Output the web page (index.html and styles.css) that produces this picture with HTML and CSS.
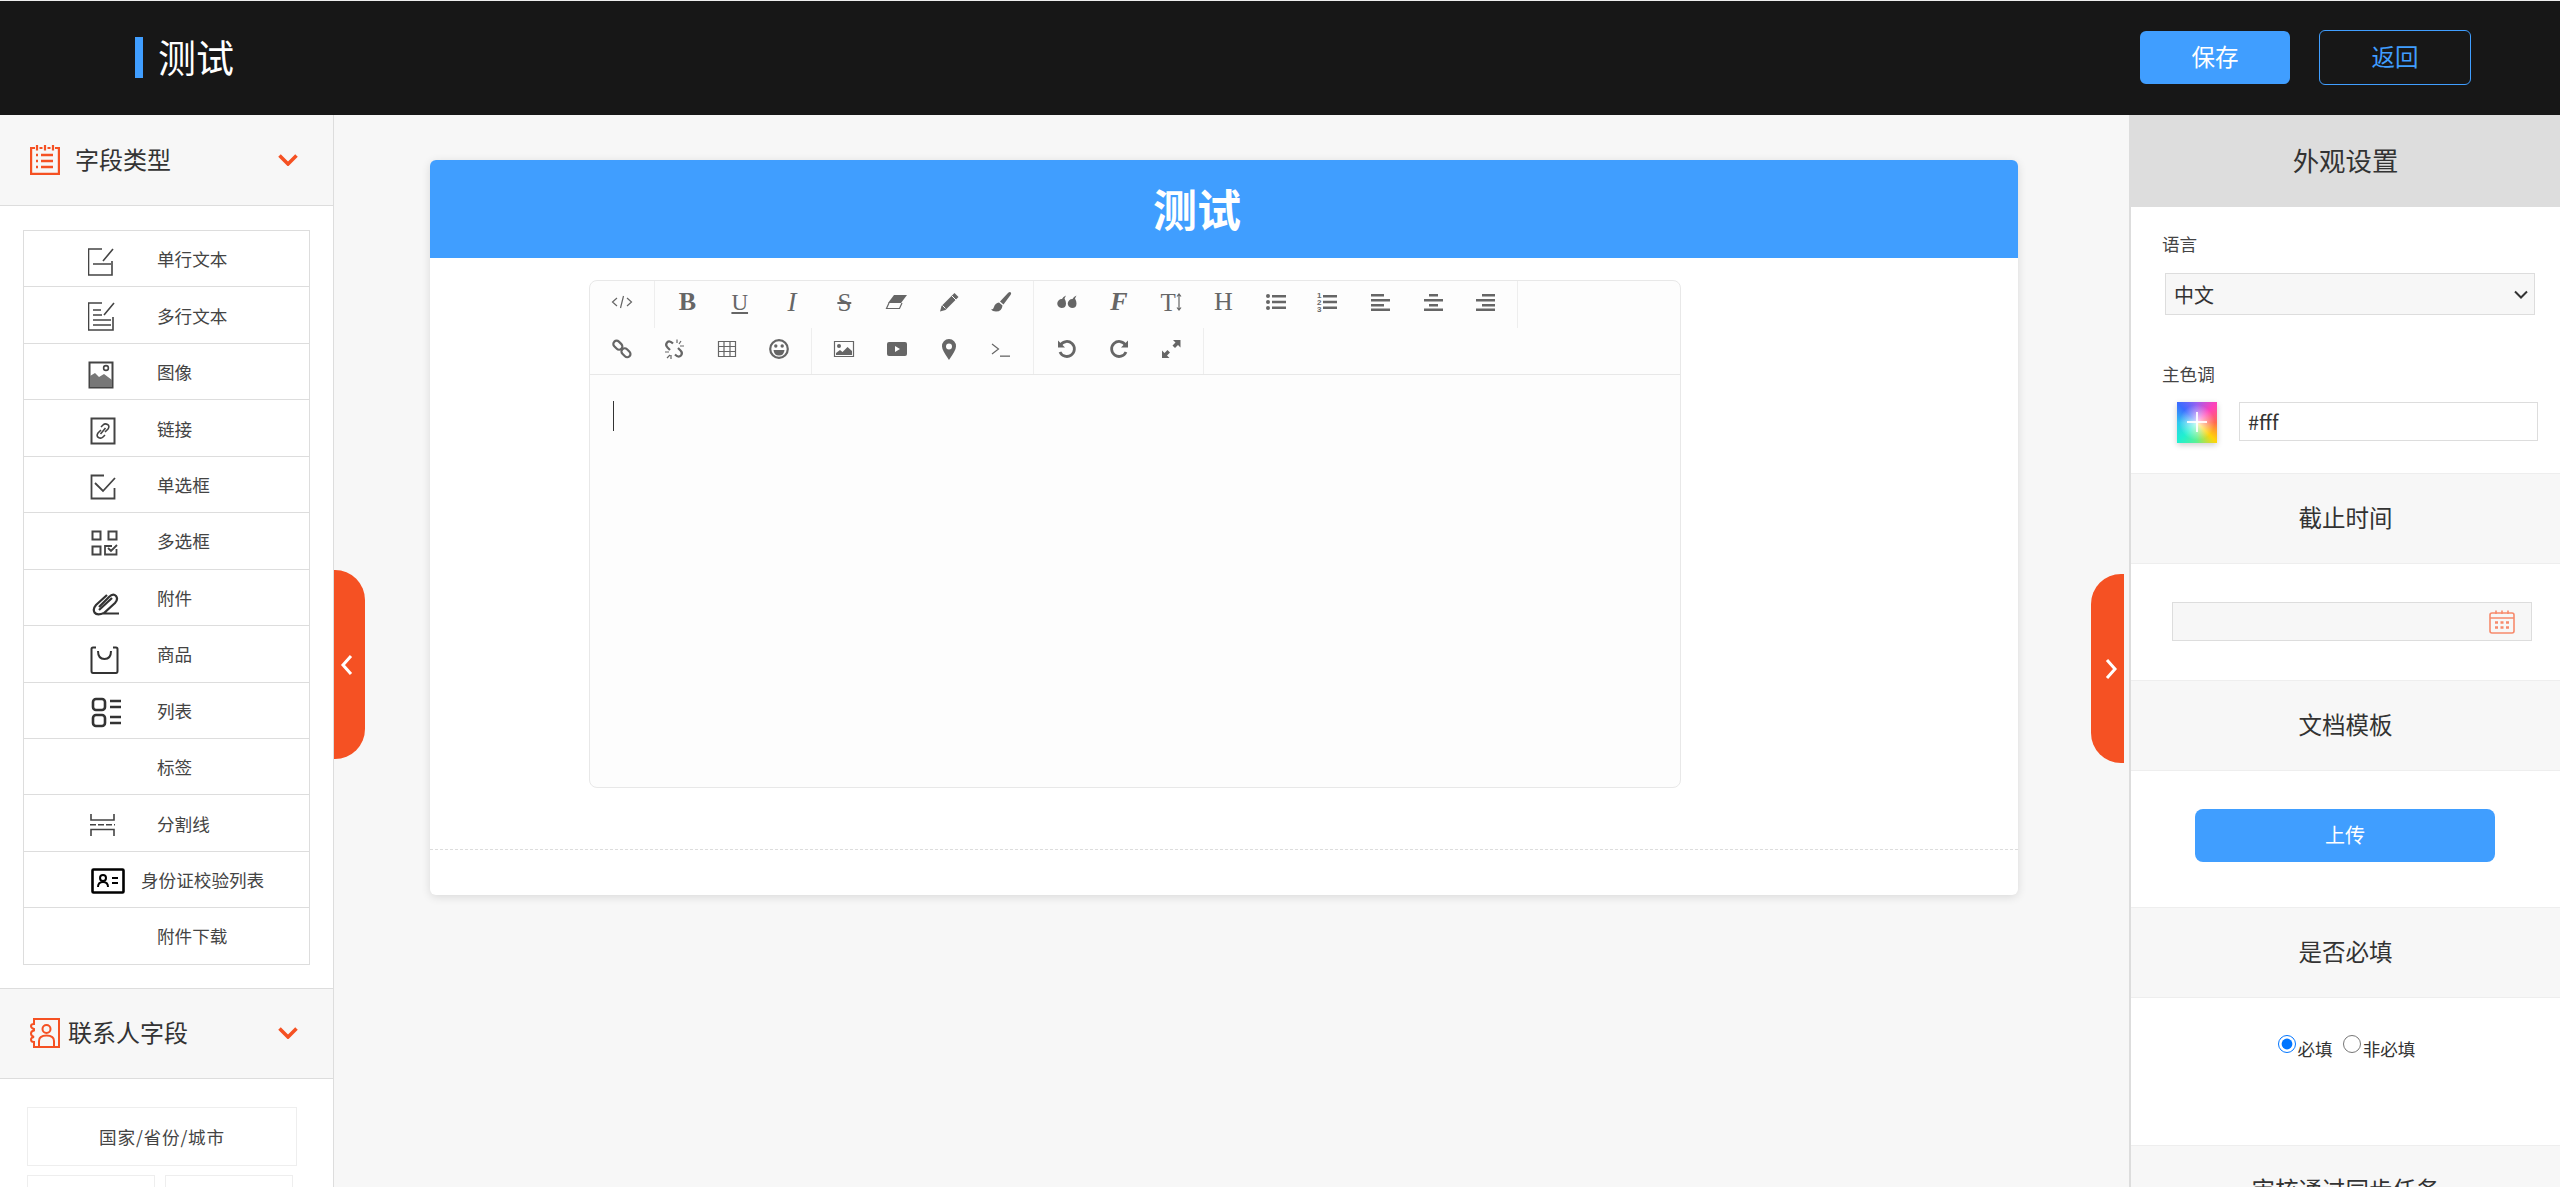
FILE: index.html
```html
<!DOCTYPE html>
<html>
<head>
  <meta charset="utf-8">
  <title>测试</title>
  <link rel="stylesheet" href="styles.css">
</head>
<body>
  <div class="topbar">
    <span class="topbar-mark"></span>
    <span class="topbar-title">测试</span>
    <button class="btn-save">保存</button>
    <button class="btn-back">返回</button>
  </div>

  <div class="workspace">
    <!-- left: field types -->
    <div class="leftbar">
      <div class="group-head">
        <svg class="group-icon" viewBox="0 0 30 30">
          <path stroke-width="2.2" d="M5 3H1.100V28.900H28.900V3H25M9.500 3H12.500M17.500 3H20.500" />
          <path stroke-width="2.2" d="M7 0V5.500M15 0V5.500M23 0V5.500" />
          <path stroke-width="2.6" d="M11 10H23M11 16H23M11 22H23" />
          <path stroke-width="2.6" d="M6 10H8M6 16H8M6 22H8" />
        </svg>
        <span class="group-name">字段类型</span>
        <svg class="group-arrow" viewBox="0 0 20 12"><path d="M1.500 1.500L10 10L18.500 1.500" /></svg>
      </div>
      <div class="field-list">
        <div class="field">
          <span class="field-icon">
            <svg viewBox="0 0 44 40"><path d="M14 10H0.500V36H24V22M25 10L15 22M5 25H23" /></svg>
          </span>单行文本
        </div>
        <div class="field">
          <span class="field-icon">
            <svg viewBox="0 0 44 40"><path d="M14 8H0.500V35H25V22M26 8L16 20M5 15H13M5 20H14M5 25H23M5 30H23" /></svg>
          </span>多行文本
        </div>
        <div class="field">
          <span class="field-icon">
            <svg viewBox="0 0 44 40">
              <rect x="1.500" y="10.500" width="23" height="25" stroke-width="2" />
              <path class="solid" d="M2 35V24L7 21L11 25L16 22L24 28V35Z" />
              <circle cx="18" cy="16" r="2.400" />
            </svg>
          </span>图像
        </div>
        <div class="field">
          <span class="field-icon">
            <svg viewBox="0 0 44 40">
              <rect x="3.500" y="10.500" width="23" height="25" stroke-width="2" />
              <path d="M13 22L10 25Q8 28 10.500 29.500Q13 31 15 29L17 27M17 24L20 21Q22 18 19.500 16.500Q17 15 15 17L13 19M12.500 26L17.500 20" />
            </svg>
          </span>链接
        </div>
        <div class="field">
          <span class="field-icon">
            <svg viewBox="0 0 44 40"><path stroke-width="1.800" d="M16 11.500H3.500V34.500H26.500V24M7 19L15 27L27 14" /></svg>
          </span>单选框
        </div>
        <div class="field">
          <span class="field-icon">
            <svg viewBox="0 0 44 40">
              <rect x="4.500" y="10.500" width="8" height="8" stroke-width="2" />
              <rect x="20.500" y="10.500" width="8" height="8" stroke-width="2" />
              <rect x="4.500" y="25.500" width="8" height="8" stroke-width="2" />
              <path stroke-width="1.800" d="M24 25H17V33.500H28.500V28M20 27L23 30L29 24" />
            </svg>
          </span>多选框
        </div>
        <div class="field">
          <span class="field-icon">
            <svg viewBox="0 0 44 40">
              <path stroke-width="2.200" stroke="#333" d="M14 36.500H31M11 30L21 20Q25 16 28 19Q30.500 22 27 26L16 36Q9 39 6.500 35.500Q4.500 32 8 28L19 18" />
              <path stroke-width="2.200" stroke="#333" d="M11 33L24 21" />
            </svg>
          </span>附件
        </div>
        <div class="field">
          <span class="field-icon">
            <svg viewBox="0 0 44 40">
              <path stroke-width="2" stroke="#333" d="M8 13.500H5Q3.500 13.500 3.500 15V37Q3.500 39 5 39H28Q29.500 39 29.500 37V15Q29.500 13.500 28 13.500H25M10 17Q10 25 16.500 25Q23 25 23 17" />
            </svg>
          </span>商品
        </div>
        <div class="field">
          <span class="field-icon">
            <svg viewBox="0 0 44 40">
              <rect class="heavy" x="5" y="9" width="12" height="11" rx="3" />
              <rect class="heavy" x="5" y="25" width="12" height="11" rx="3" />
              <path class="heavy" d="M22 11H33M22 17H33M22 27H33M22 33H33" />
            </svg>
          </span>列表
        </div>
        <div class="field"><span class="field-icon"></span>标签</div>
        <div class="field">
          <span class="field-icon">
            <svg viewBox="0 0 44 40">
              <path d="M3 11V17H26V11M3 33V26.500H26V33" />
              <path stroke-width="1.400" stroke-dasharray="6 2" d="M2 21.700H27" />
            </svg>
          </span>分割线
        </div>
        <div class="field">
          <span class="field-icon field-icon-id">
            <svg viewBox="0 0 44 40">
              <rect class="black" x="4.500" y="9.500" width="31" height="23" rx="1" />
              <circle class="black-thin" cx="15" cy="18" r="3" />
              <path class="black-thin" d="M10 27Q10 22 15 22Q20 22 20 27M24 18H30M24 23H30" />
            </svg>
          </span>身份证校验列表
        </div>
        <div class="field"><span class="field-icon"></span>附件下载</div>
      </div>

      <div class="group-head group-head-contact">
        <svg class="group-icon" viewBox="0 0 30 30">
          <path stroke-width="2" d="M4 1H29V29H4V24Q1 24 1 21.500Q1 19.500 4 19Q1 18 1 15.500Q1 13 4 12.500V11Q1 10 1 8Q1 6 4 6Z" />
          <circle stroke-width="2" cx="16.500" cy="11" r="4" />
          <path stroke-width="2" d="M9 29V23Q9 17.500 16.500 17.500Q24 17.500 24 23V29" />
        </svg>
        <span class="group-name">联系人字段</span>
        <svg class="group-arrow" viewBox="0 0 20 12"><path d="M1.500 1.500L10 10L18.500 1.500" /></svg>
      </div>
      <div class="contact-list">
        <div class="contact contact-full">国家/省份/城市</div>
        <div class="contact contact-half"></div>
        <div class="contact contact-half"></div>
      </div>
    </div>

    <!-- middle: form canvas -->
    <div class="stage">
      <div class="stage-tab stage-tab-left">
        <svg viewBox="0 0 14 22"><path d="M11 2L3 11L11 20" /></svg>
      </div>
      <div class="stage-tab stage-tab-right">
        <svg viewBox="0 0 14 22"><path d="M3 2L11 11L3 20" /></svg>
      </div>

      <div class="sheet">
        <div class="sheet-head">测试</div>
        <div class="sheet-body">
          <div class="editor">
            <div class="toolbar">
              <div class="tb-group">
                <span class="tb"><svg viewBox="0 0 24 24"><path class="line" d="M7 8L2.500 12L7 16M17 8L21.500 12L17 16M13.500 6L10.500 18" /></svg></span>
              </div>
              <div class="tb-group">
                <span class="tb tb-b">B</span>
                <span class="tb tb-u">U</span>
                <span class="tb tb-i">I</span>
                <span class="tb tb-s">S</span>
                <span class="tb"><svg viewBox="0 0 24 24"><path d="M9 5H22L16 13H3Z" /><path class="line" d="M4 13L1.500 18.500H14.500L17 13" /></svg></span>
                <span class="tb"><svg viewBox="0 0 24 24"><path d="M17.500 3L21.500 7L8.500 20L3 21.500L4.500 16Z" /><path class="line-light" d="M15 6L19 10M5.500 15.500L8.500 18.500" /></svg></span>
                <span class="tb"><svg viewBox="0 0 24 24"><path d="M21 2Q23 3 21.500 5L14.500 14.500L11 11.500L19 3Q20 2 21 2ZM10 12.500L13.500 15.500Q13 21.500 7 21.500Q3.500 21.500 2 19.500Q4.500 19.500 5 17Q6 13 10 12.500Z" /></svg></span>
              </div>
              <div class="tb-group">
                <span class="tb"><svg viewBox="0 0 24 24"><path d="M6.500 18A4.500 4.500 0 1 1 7 9Q8 6.500 11 5.500L9.500 8.500Q11 11 11 13.500Q11 18 6.500 18ZM17 18A4.500 4.500 0 1 1 17.500 9Q18.500 6.500 21.500 5.500L20 8.500Q21.500 11 21.500 13.500Q21.500 18 17 18Z" /></svg></span>
                <span class="tb tb-f">F</span>
                <span class="tb tb-t">T<svg class="tb-arrow" viewBox="0 0 6 18"><path class="line" d="M3 1V17M1 3.500L3 1L5 3.500M1 14.500L3 17L5 14.500" /></svg></span>
                <span class="tb tb-h">H</span>
                <span class="tb"><svg viewBox="0 0 24 24"><circle cx="4" cy="6" r="2" /><circle cx="4" cy="12" r="2" /><circle cx="4" cy="18" r="2" /><path d="M8 5H22V7.500H8ZM8 10.800H22V13.200H8ZM8 16.500H22V19H8Z" /></svg></span>
                <span class="tb"><svg viewBox="0 0 24 24"><text class="tb-num" x="1" y="8">1</text><text class="tb-num" x="1" y="15">2</text><text class="tb-num" x="1" y="22">3</text><path d="M7 5H21V7.500H7ZM7 10.800H21V13.200H7ZM7 16.500H21V19H7Z" /></svg></span>
                <span class="tb"><svg viewBox="0 0 24 24"><path d="M3 4H16V6.500H3ZM3 9H22V11.500H3ZM3 14H16V16.500H3ZM3 18.500H22V21H3Z" /></svg></span>
                <span class="tb"><svg viewBox="0 0 24 24"><path d="M8 4H17V6.500H8ZM3 9H22V11.500H3ZM8 14H17V16.500H8ZM3 18.500H22V21H3Z" /></svg></span>
                <span class="tb"><svg viewBox="0 0 24 24"><path d="M9 4H22V6.500H9ZM3 9H22V11.500H3ZM9 14H22V16.500H9ZM3 18.500H22V21H3Z" /></svg></span>
              </div>
              <div class="tb-group">
                <span class="tb"><svg viewBox="0 0 24 24"><rect class="line thick" x="3" y="5" width="10" height="6.500" rx="3.200" transform="rotate(45 8 8)" /><rect class="line thick" x="11" y="12.500" width="10" height="6.500" rx="3.200" transform="rotate(45 16 15.700)" /></svg></span>
                <span class="tb"><svg viewBox="0 0 24 24"><path class="line thick" d="M11 6.500Q7.500 3 5 5.500Q3 8 5.500 10.500L8 13M13 17.500Q16.500 21 19 18.500Q21 16 18.500 13.500L16 11" /><path class="line" d="M15 2.500V6M19 4L17 7M22 9H18M3 15H7M5 21L8 18M9 22V18" /></svg></span>
                <span class="tb"><svg viewBox="0 0 24 24"><path class="line" stroke-width="1.600" d="M3.500 4.500H20.500V19.500H3.500ZM3.500 9.500H20.500M3.500 14.500H20.500M9 4.500V19.500M15 4.500V19.500" /></svg></span>
                <span class="tb"><svg viewBox="0 0 24 24"><circle class="line thick" cx="12" cy="12" r="8.800" /><circle cx="8.800" cy="9" r="1.700" /><circle cx="15.200" cy="9" r="1.700" /><path d="M6.500 13H17.500Q17 18.500 12 18.500Q7 18.500 6.500 13Z" /></svg></span>
              </div>
              <div class="tb-group">
                <span class="tb"><svg viewBox="0 0 24 24"><path class="line" d="M2.500 4.500H21.500V19.500H2.500Z" /><circle cx="7" cy="9" r="2" /><path d="M4 18V16L8 13L10.500 15L15.500 10L20 14V18Z" /></svg></span>
                <span class="tb"><svg viewBox="0 0 24 24"><path fill-rule="evenodd" d="M4 5H20Q22 5 22 7V17Q22 19 20 19H4Q2 19 2 17V7Q2 5 4 5ZM10 9V15L15 12Z" /></svg></span>
                <span class="tb"><svg viewBox="0 0 24 24"><path fill-rule="evenodd" d="M12 2A7 7 0 0 1 19 9.500Q19 13 12 23Q5 13 5 9.500A7 7 0 0 1 12 2ZM12 6.500A3 3 0 1 0 12 12.500A3 3 0 1 0 12 6.500Z" /></svg></span>
                <span class="tb"><svg viewBox="0 0 24 24"><path class="line" d="M3 7L9.500 12L3 17" /><path d="M11 18.500H21V19.800H11Z" /></svg></span>
              </div>
              <div class="tb-group">
                <span class="tb"><svg viewBox="0 0 24 24"><path class="line heavy-line" d="M5.500 8A7.500 7.500 0 1 1 5 15" /><path d="M3 3.500L3 10.500H10Z" /></svg></span>
                <span class="tb"><svg viewBox="0 0 24 24"><path class="line heavy-line" d="M18.500 8A7.500 7.500 0 1 0 19 15" /><path d="M21 3.500L21 10.500H14Z" /></svg></span>
                <span class="tb"><svg viewBox="0 0 24 24"><path d="M14 3H21.500V10.500L19 8L16 11L13.500 8.500L16.500 5.500ZM10.500 21H3V13.500L5.500 16L8.500 13L11 15.500L8 18.500Z" /></svg></span>
              </div>
            </div>
            <div class="editor-text"><span class="caret"></span></div>
          </div>
        </div>
      </div>
    </div>

    <!-- right: settings -->
    <div class="rightbar">
      <div class="set-head">外观设置</div>
      <div class="set-look">
        <div class="set-label">语言</div>
        <div class="select-wrap">
          <select class="set-select"><option>中文</option></select>
          <svg class="select-arrow" viewBox="0 0 14 9"><path d="M1 1.500L7 7.500L13 1.500" /></svg>
        </div>
        <div class="set-label set-label-color">主色调</div>
        <div class="color-row">
          <span class="color-swatch"></span>
          <input class="color-input" type="text" value="#fff">
        </div>
      </div>
      <div class="set-title">截止时间</div>
      <div class="set-date">
        <div class="date-box">
          <svg viewBox="0 0 26 24">
            <rect x="1" y="3" width="24" height="20" rx="2" />
            <path d="M1 8H25M7 0.500V4M13 0.500V4M19 0.500V4" />
            <path class="dots" d="M6 12.500H9M11.500 12.500H14.500M17 12.500H20M6 17.500H9M11.500 17.500H14.500M17 17.500H20" />
          </svg>
        </div>
      </div>
      <div class="set-title">文档模板</div>
      <div class="set-upload"><button class="btn-upload">上传</button></div>
      <div class="set-title">是否必填</div>
      <div class="set-required">
        <label><input type="radio" name="required" checked>必填</label>
        <label><input type="radio" name="required">非必填</label>
      </div>
      <div class="set-title">审核通过同步任务</div>
    </div>
  </div>
</body>
</html>
```

FILE: styles.css
```css
* { box-sizing: border-box; }
html, body { height: 100%; }
body { margin: 0; overflow: hidden; background: #f7f7f7; color: #333; font-family: "Noto Sans CJK SC", "Noto Sans", sans-serif; font-size: 17.6px; }
button { font-family: inherit; cursor: pointer; }

/* top bar */
.topbar { display: flex; align-items: center; height: 115px; padding: 0 89px 1px 135px; background: #171717; border-top: 1px solid #eee; }
.topbar-mark { width: 8px; height: 41px; margin-right: 15px; background: #409eff; }
.topbar-title { flex: 1; padding-bottom: 4px; color: #fff; font-size: 38px; line-height: 50px; }
.btn-save { width: 150px; height: 53px; padding: 0 0 3px; color: #fff; font-size: 23.5px; background: #409eff; border: none; border-radius: 6px; }
.btn-back { width: 152px; height: 55px; margin-left: 29px; padding: 0 0 3px; color: #409eff; font-size: 23.5px; background: transparent; border: 1px solid #409eff; border-radius: 6px; }

.workspace { display: flex; height: 1072px; }

/* left bar */
.leftbar { flex: none; width: 334px; background: #fff; border-right: 1px solid #ddd; }
.group-head { display: flex; align-items: center; height: 91px; padding: 0 35px 0 30px; background: #f7f7f7; border-bottom: 1px solid #ddd; }
.group-head-contact { margin-top: 23px; border-top: 1px solid #ddd; }
.group-icon { width: 30px; height: 30px; fill: none; stroke: #f55123; stroke-width: 1.6; }
.group-name { margin-left: 15px; padding-bottom: 2px; font-size: 24px; line-height: 30px; }
.group-head-contact .group-name { margin-left: 8px; }
.group-arrow { width: 20px; height: 12px; margin-left: auto; fill: none; stroke: #f55123; stroke-width: 3.6; }

.field-list { width: 287px; margin: 24px 0 0 23px; border: 1px solid #ddd; border-top: none; }
.field { display: flex; align-items: center; height: 56.45px; padding-left: 63px; border-top: 1px solid #ddd; color: #444; }
.field-icon { display: flex; flex: none; width: 70px; margin-left: 0; }
.field-icon-id { width: 54px; }
.field-icon svg { width: 44px; height: 40px; margin-left: 1px; fill: none; stroke: #444; stroke-width: 1.6; }
.field-icon .solid { fill: #777; stroke: none; }
.field-icon .heavy { stroke: #333; stroke-width: 2.6; }
.field-icon .black { stroke: #000; stroke-width: 2.6; }
.field-icon .black-thin { stroke: #000; stroke-width: 2; }

.contact-list { display: flex; flex-wrap: wrap; gap: 9px 10px; padding: 28px 0 0 27px; }
.contact { display: flex; align-items: center; justify-content: center; height: 59px; border: 1px solid #eee; color: #444; }
.contact-full { width: 270px; letter-spacing: .8px; }
.contact-half { width: 128px; }

/* middle */
.stage { position: relative; flex: 1; padding: 45px 0 0 96px; }
.stage-tab { position: absolute; display: flex; align-items: center; justify-content: center; width: 31px; height: 189px; background: #f55123; }
.stage-tab svg { width: 14px; height: 22px; fill: none; stroke: #fff; stroke-width: 3; }
.stage-tab-left { top: 455px; left: 0; border-radius: 0 30px 30px 0; padding-right: 6px; }
.stage-tab-right { top: 459px; right: 5px; width: 33px; border-radius: 30px 0 0 30px; padding-left: 7px; }

.sheet { width: 1588px; height: 735px; background: #fff; border-radius: 6px; box-shadow: 0 2px 10px rgba(0, 0, 0, .12); }
.sheet-head { height: 98px; padding-right: 54px; color: #fff; font-size: 44px; font-weight: bold; line-height: 96px; text-align: center; background: #409eff; border-radius: 6px 6px 0 0; }
.sheet-body { height: 592px; padding: 22px 0 0 159px; border-bottom: 1px dashed #ddd; }

.editor { width: 1092px; height: 508px; background: #fdfdfd; border: 1px solid #e8e8e8; border-radius: 8px; }
.toolbar { display: flex; flex-wrap: wrap; border-bottom: 1px solid #e8e8e8; }
.tb-group { display: flex; height: 46.500px; padding: 0 6px; border-right: 1px solid #eee; }
.tb { display: flex; align-items: center; justify-content: center; width: 52.300px; padding-bottom: 4px; color: #666; font-family: "Liberation Serif", serif; line-height: 1; }
.tb svg { width: 24px; height: 24px; fill: #666; }
.tb svg .line { fill: none; stroke: #666; stroke-width: 1.200; }
.tb svg .line-light { fill: none; stroke: #fdfdfd; stroke-width: 1; }
.tb svg .thick { stroke-width: 2.200; }
.tb svg .heavy-line { stroke-width: 2.800; }
.tb-b { font-size: 26px; font-weight: bold; }
.tb-u { font-size: 23px; text-decoration: underline; }
.tb-i { font-size: 27px; font-style: italic; }
.tb-s { font-size: 25px; text-decoration: line-through; }
.tb-f { font-size: 26px; font-weight: bold; font-style: italic; }
.tb-t { font-size: 25px; }
.tb-h { font-size: 26px; }
.tb svg.tb-arrow { width: 6px; height: 18px; }
.tb-num { font-family: "Liberation Sans", sans-serif; font-size: 8px; font-weight: bold; }
.editor-text { padding: 26px 0 0 23px; }
.caret { display: block; width: 1px; height: 30px; background: #333; }

/* right bar */
.rightbar { flex: none; width: 431px; overflow: hidden; background: #fff; border-left: 2px solid #ddd; }
.set-head { height: 92px; padding-top: 1px; font-size: 26.4px; line-height: 88px; text-align: center; background: #ddd; }
.set-look { height: 266px; padding: 26px 0 0 31px; }
.set-label { font-size: 17.6px; line-height: 22px; color: #444; }
.set-label-color { margin-top: 48px; }
.select-wrap { position: relative; width: 370px; margin: 18px 0 0 3px; }
.set-select { display: block; width: 100%; height: 42px; padding: 0 8px; color: #333; font-family: inherit; font-size: 20px; background: #f7f7f7; border: 1px solid #ddd; border-radius: 0; appearance: none; }
.select-arrow { position: absolute; top: 17px; right: 7px; width: 14px; height: 9px; fill: none; stroke: #333; stroke-width: 2; }
.color-row { display: flex; margin: 17px 0 0 15px; }
.color-swatch { position: relative; flex: none; width: 40px; height: 41px; background: radial-gradient(circle at center, rgba(255, 255, 255, .8) 0, rgba(255, 255, 255, 0) 62%), conic-gradient(from 45deg, #ff40b8, #ff6a50, #ffd40a 25%, #60f090, #20f0d0 50%, #30c8f0, #3a6cff 75%, #9a60f0, #ff40b8); box-shadow: 0 2px 6px rgba(0, 0, 0, .2); }
.color-swatch::before { content: ""; position: absolute; left: 10px; top: 19px; width: 20px; height: 2px; background: rgba(255, 255, 255, .9); }
.color-swatch::after { content: ""; position: absolute; left: 19px; top: 10px; width: 2px; height: 20px; background: rgba(255, 255, 255, .9); }
.color-input { width: 299px; height: 39px; margin-left: 22px; padding: 0 8px; color: #333; font-family: inherit; font-size: 20px; border: 1px solid #ddd; }
.set-title { height: 91px; font-size: 23.5px; line-height: 87px; text-align: center; background: #f7f7f7; border-top: 1px solid #eee; border-bottom: 1px solid #eee; }
.set-date { height: 116px; padding: 38px 0 0 41px; }
.date-box { display: flex; align-items: center; justify-content: flex-end; width: 360px; height: 39px; padding-right: 16px; background: #f7f7f7; border: 1px solid #ddd; }
.date-box svg { width: 26px; height: 24px; fill: none; stroke: #f78a6c; stroke-width: 1.600; }
.date-box .dots { stroke-width: 2.400; }
.set-upload { height: 136px; padding: 38px 0 0 64px; }
.btn-upload { width: 300px; height: 53px; padding: 0 0 2px; color: #fff; font-size: 20px; background: #409eff; border: none; border-radius: 8px; }
.set-required { height: 147px; padding: 37px 0 0 2px; font-size: 17.6px; line-height: 26px; text-align: center; }
.set-required input { width: 18px; height: 18px; margin: 0 2px 0 0; vertical-align: 3px; }
.set-required label { margin: 0 3px; }
```
